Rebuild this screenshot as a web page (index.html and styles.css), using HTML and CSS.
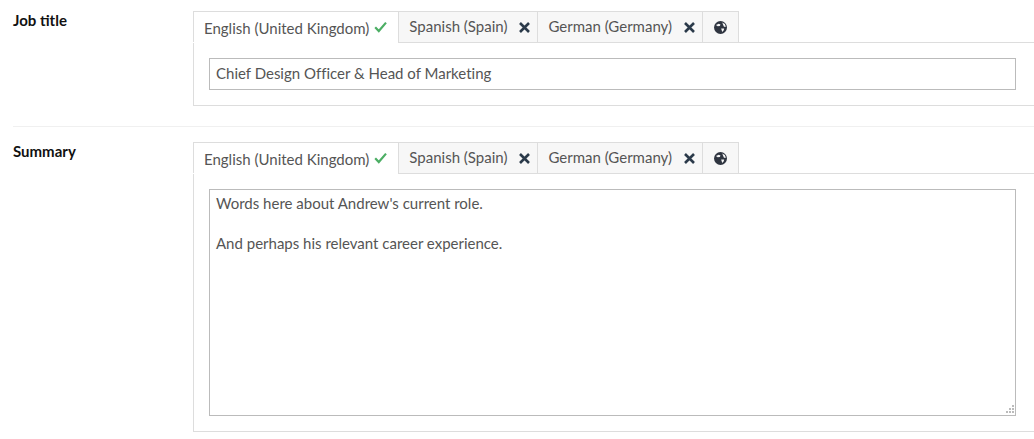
FILE: index.html
```html
<!DOCTYPE html>
<html lang="en">
<head>
<meta charset="utf-8">
<title>Profile</title>
<link rel="stylesheet" href="styles.css">
</head>
<body>
<svg class="defs" width="0" height="0" aria-hidden="true">
  <symbol id="check" viewBox="0 0 13 12"><path d="M1.2 6.2 L4.8 10 L12 1.6" fill="none" stroke="currentColor" stroke-width="2.2"/></symbol>
  <symbol id="cross" viewBox="0 0 11 11"><path d="M1 1 L10 10 M10 1 L1 10" fill="none" stroke="currentColor" stroke-width="2.6"/></symbol>
  <symbol id="globe" viewBox="0 0 12 12"><circle cx="6" cy="6" r="6" fill="currentColor"/><path d="M1.8 3.6 L4.4 2.6 L6 3.2 L5.4 4.6 L3.4 4.8 Z M7.6 1.4 L10 2.8 L11 5.4 L9.2 5.2 L8.4 3.4 Z M6.6 7 L9.4 7 L9 8.6 L7.6 10.2 Z" fill="#f7f7f7"/></symbol>
  <symbol id="grip" viewBox="0 0 8 8"><path d="M6 0h2v2h-2z M3 3h2v2h-2z M6 3h2v2h-2z M0 6h2v2h-2z M3 6h2v2h-2z M6 6h2v2h-2z" fill="currentColor"/></symbol>
</svg>
<main class="form">
  <section class="row row-first">
    <h2 class="label">Job title</h2>
    <div class="field">
      <div class="tabs">
        <div class="tab tab-active">English (United Kingdom)<svg class="icon check"><use href="#check"/></svg></div>
        <div class="tab">Spanish (Spain)<svg class="icon cross"><use href="#cross"/></svg></div>
        <div class="tab">German (Germany)<svg class="icon cross"><use href="#cross"/></svg></div>
        <div class="tab tab-globe"><svg class="icon globe"><use href="#globe"/></svg></div>
      </div>
      <div class="panel">
        <input class="input input-line" type="text" value="Chief Design Officer &amp; Head of Marketing">
      </div>
    </div>
  </section>
  <section class="row">
    <h2 class="label">Summary</h2>
    <div class="field">
      <div class="tabs">
        <div class="tab tab-active">English (United Kingdom)<svg class="icon check"><use href="#check"/></svg></div>
        <div class="tab">Spanish (Spain)<svg class="icon cross"><use href="#cross"/></svg></div>
        <div class="tab">German (Germany)<svg class="icon cross"><use href="#cross"/></svg></div>
        <div class="tab tab-globe"><svg class="icon globe"><use href="#globe"/></svg></div>
      </div>
      <div class="panel">
        <div class="area-wrap">
          <textarea class="input textarea">Words here about Andrew's current role.

And perhaps his relevant career experience.</textarea>
          <svg class="grip"><use href="#grip"/></svg>
        </div>
      </div>
    </div>
  </section>
</main>
</body>
</html>
```
FILE: styles.css
```css
html, body {
  margin: 0;
  padding: 0;
  background: #fff;
  overflow: hidden;
}
body {
  width: 1034px;
  height: 439px;
  font-family: Lato, "Liberation Sans", sans-serif;
  font-size: 15px;
  color: #555;
}
.defs {
  position: absolute;
}
.form {
  padding: 11px 0 0 13px;
}
.row {
  display: flex;
  margin-top: 20px;
  padding-top: 15px;
  border-top: 1px solid #f0f0f0;
}
.row-first {
  margin-top: 0;
  padding-top: 0;
  border-top: 0;
}
.label {
  width: 180px;
  flex: none;
  margin: 0;
  font-size: 15px;
  font-weight: 700;
  line-height: 18px;
  color: #111;
}
.field {
  width: 841px;
  flex: none;
}
.tabs {
  display: flex;
  height: 32px;
  background: linear-gradient(to top, #ddd 1px, transparent 1px);
}
.tab {
  display: flex;
  align-items: center;
  height: 31px;
  box-sizing: border-box;
  padding: 0 7px 2px 10px;
  border-top: 1px solid #ddd;
  border-right: 1px solid #ddd;
  background: #f7f7f7;
  white-space: nowrap;
}
.tab-active {
  height: 32px;
  padding: 1px 11px 0 11px;
  background: linear-gradient(#ddd, #ddd) left top / 1px 30px no-repeat, #fff;
}
.tab-globe {
  padding: 0 11px;
}
.icon {
  flex: none;
  display: block;
}
.check {
  width: 13px;
  height: 12px;
  margin-left: 5px;
  margin-top: -3px;
  color: #4cae64;
}
.cross {
  width: 11px;
  height: 11px;
  margin-left: 12px;
  margin-top: 2px;
  color: #2b3a4a;
}
.globe {
  width: 13px;
  height: 13px;
  color: #2f3540;
}
.panel {
  padding: 15px 16px 15px 15px;
  border: solid #ddd;
  border-width: 0 0 1px 1px;
}
.input {
  display: block;
  width: 807px;
  height: 32px;
  box-sizing: border-box;
  margin: 0;
  padding: 0 6px 2px;
  border: 1px solid #bbb;
  border-radius: 0;
  outline: 0;
  font: 15px/20px Lato, "Liberation Sans", sans-serif;
  color: #555;
  background: #fff;
}
.input-line {
  font-variant-ligatures: none;
}
.area-wrap {
  position: relative;
}
.textarea {
  height: 227px;
  padding: 3px 6px;
  resize: none;
}
.grip {
  position: absolute;
  right: 4px;
  bottom: 3px;
  width: 8px;
  height: 8px;
  color: #bbb;
}
```
